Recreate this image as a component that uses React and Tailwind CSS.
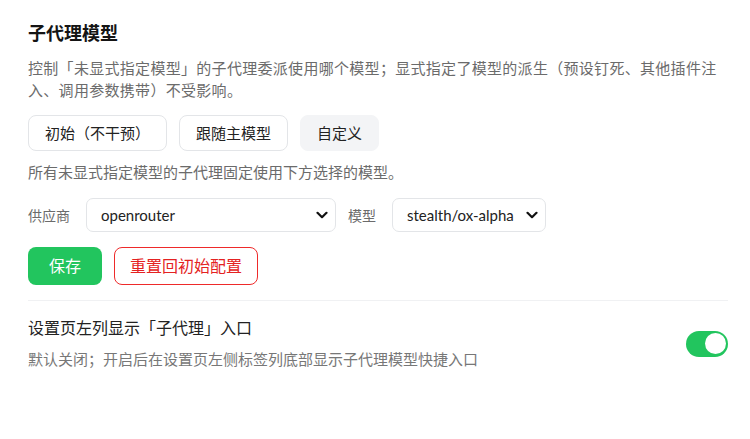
import React, { useState } from "react";

const FONT = { fontFamily: '"Lato", "Noto Sans CJK SC", sans-serif' };

function Chevron() {
  return (
    <svg
      width="12"
      height="8"
      viewBox="0 0 12 8"
      className="pointer-events-none absolute right-[8px] top-1/2 -translate-y-1/2"
    >
      <path d="M1.5 1.8 L6 6.2 L10.5 1.8" fill="none" stroke="#111" strokeWidth="2.2" strokeLinecap="round" strokeLinejoin="round" />
    </svg>
  );
}

function Select({ value, options, width }) {
  return (
    <div className={`relative ${width}`}>
      <select
        defaultValue={value}
        className="h-[34px] w-full appearance-none rounded-[7px] border border-[#e3e5e8] bg-white pl-[14px] pr-7 text-[15px] text-[#222] outline-none"
        style={FONT}
      >
        {options.map((o) => (
          <option key={o}>{o}</option>
        ))}
      </select>
      <Chevron />
    </div>
  );
}

export default function App() {
  const [mode, setMode] = useState("custom");
  const [showEntry, setShowEntry] = useState(true);

  const modes = [
    { id: "initial", label: "初始（不干预）" },
    { id: "follow", label: "跟随主模型" },
    { id: "custom", label: "自定义" },
  ];

  return (
    <div className="min-h-[439px] w-[750px] bg-white pl-7 pr-[22px] pt-5" style={FONT}>
      <h2 className="text-[18px] font-bold leading-[26px] text-[#141414]">子代理模型</h2>
      <p className="mt-[11px] text-[15px] leading-[22px] tracking-[0.3px] text-[#6b6b6b]">
        控制「未显式指定模型」的子代理委派使用哪个模型；显式指定了模型的派生（预设钉死、其他插件注入、调用参数携带）不受影响。
      </p>

      <div className="mt-3.5 flex gap-3">
        {modes.map((m) => (
          <button
            key={m.id}
            onClick={() => setMode(m.id)}
            className={
              "h-9 rounded-lg border px-4 text-[15px] text-[#222] " +
              (mode === m.id
                ? "border-[#f3f4f6] bg-[#f3f4f6]"
                : "border-[#e3e5e8] bg-white")
            }
          >
            {m.label}
          </button>
        ))}
      </div>

      <p className="mt-2.5 text-[15px] leading-[22px] text-[#6b6b6b]">
        所有未显式指定模型的子代理固定使用下方选择的模型。
      </p>

      <div className="mt-[15px] flex items-center">
        <span className="text-[14px] text-[#6b6b6b]">供应商</span>
        <div className="ml-4">
          <Select value="openrouter" options={["openrouter", "anthropic", "openai"]} width="w-[250px]" />
        </div>
        <span className="ml-3 text-[14px] text-[#6b6b6b]">模型</span>
        <div className="ml-4">
          <Select value="stealth/ox-alpha" options={["stealth/ox-alpha"]} width="w-[154px]" />
        </div>
      </div>

      <div className="mt-[15px] flex gap-3">
        <button className="h-[38px] rounded-lg border border-transparent bg-[#22c55e] px-5 text-[16px] text-white">
          保存
        </button>
        <button className="h-[38px] rounded-lg border border-[#ee2a2a] bg-white px-[15px] text-[16px] text-[#e42222]">
          重置回初始配置
        </button>
      </div>

      <div className="mt-[15px] h-px bg-[#f0f1f3]" />

      <div className="mt-4 flex items-center justify-between">
        <div>
          <div className="text-[16px] leading-[22px] text-[#222]">设置页左列显示「子代理」入口</div>
          <div className="mt-[9px] text-[15px] leading-[22px] text-[#777]">
            默认关闭；开启后在设置页左侧标签列底部显示子代理模型快捷入口
          </div>
        </div>
        <button
          onClick={() => setShowEntry(!showEntry)}
          className={
            "flex h-[26px] w-[42px] items-center rounded-full p-[2px] " +
            (showEntry ? "justify-end bg-[#22c55e]" : "justify-start bg-[#d1d5db]")
          }
        >
          <span className="block h-[21px] w-[21px] rounded-full bg-white" />
        </button>
      </div>
    </div>
  );
}
